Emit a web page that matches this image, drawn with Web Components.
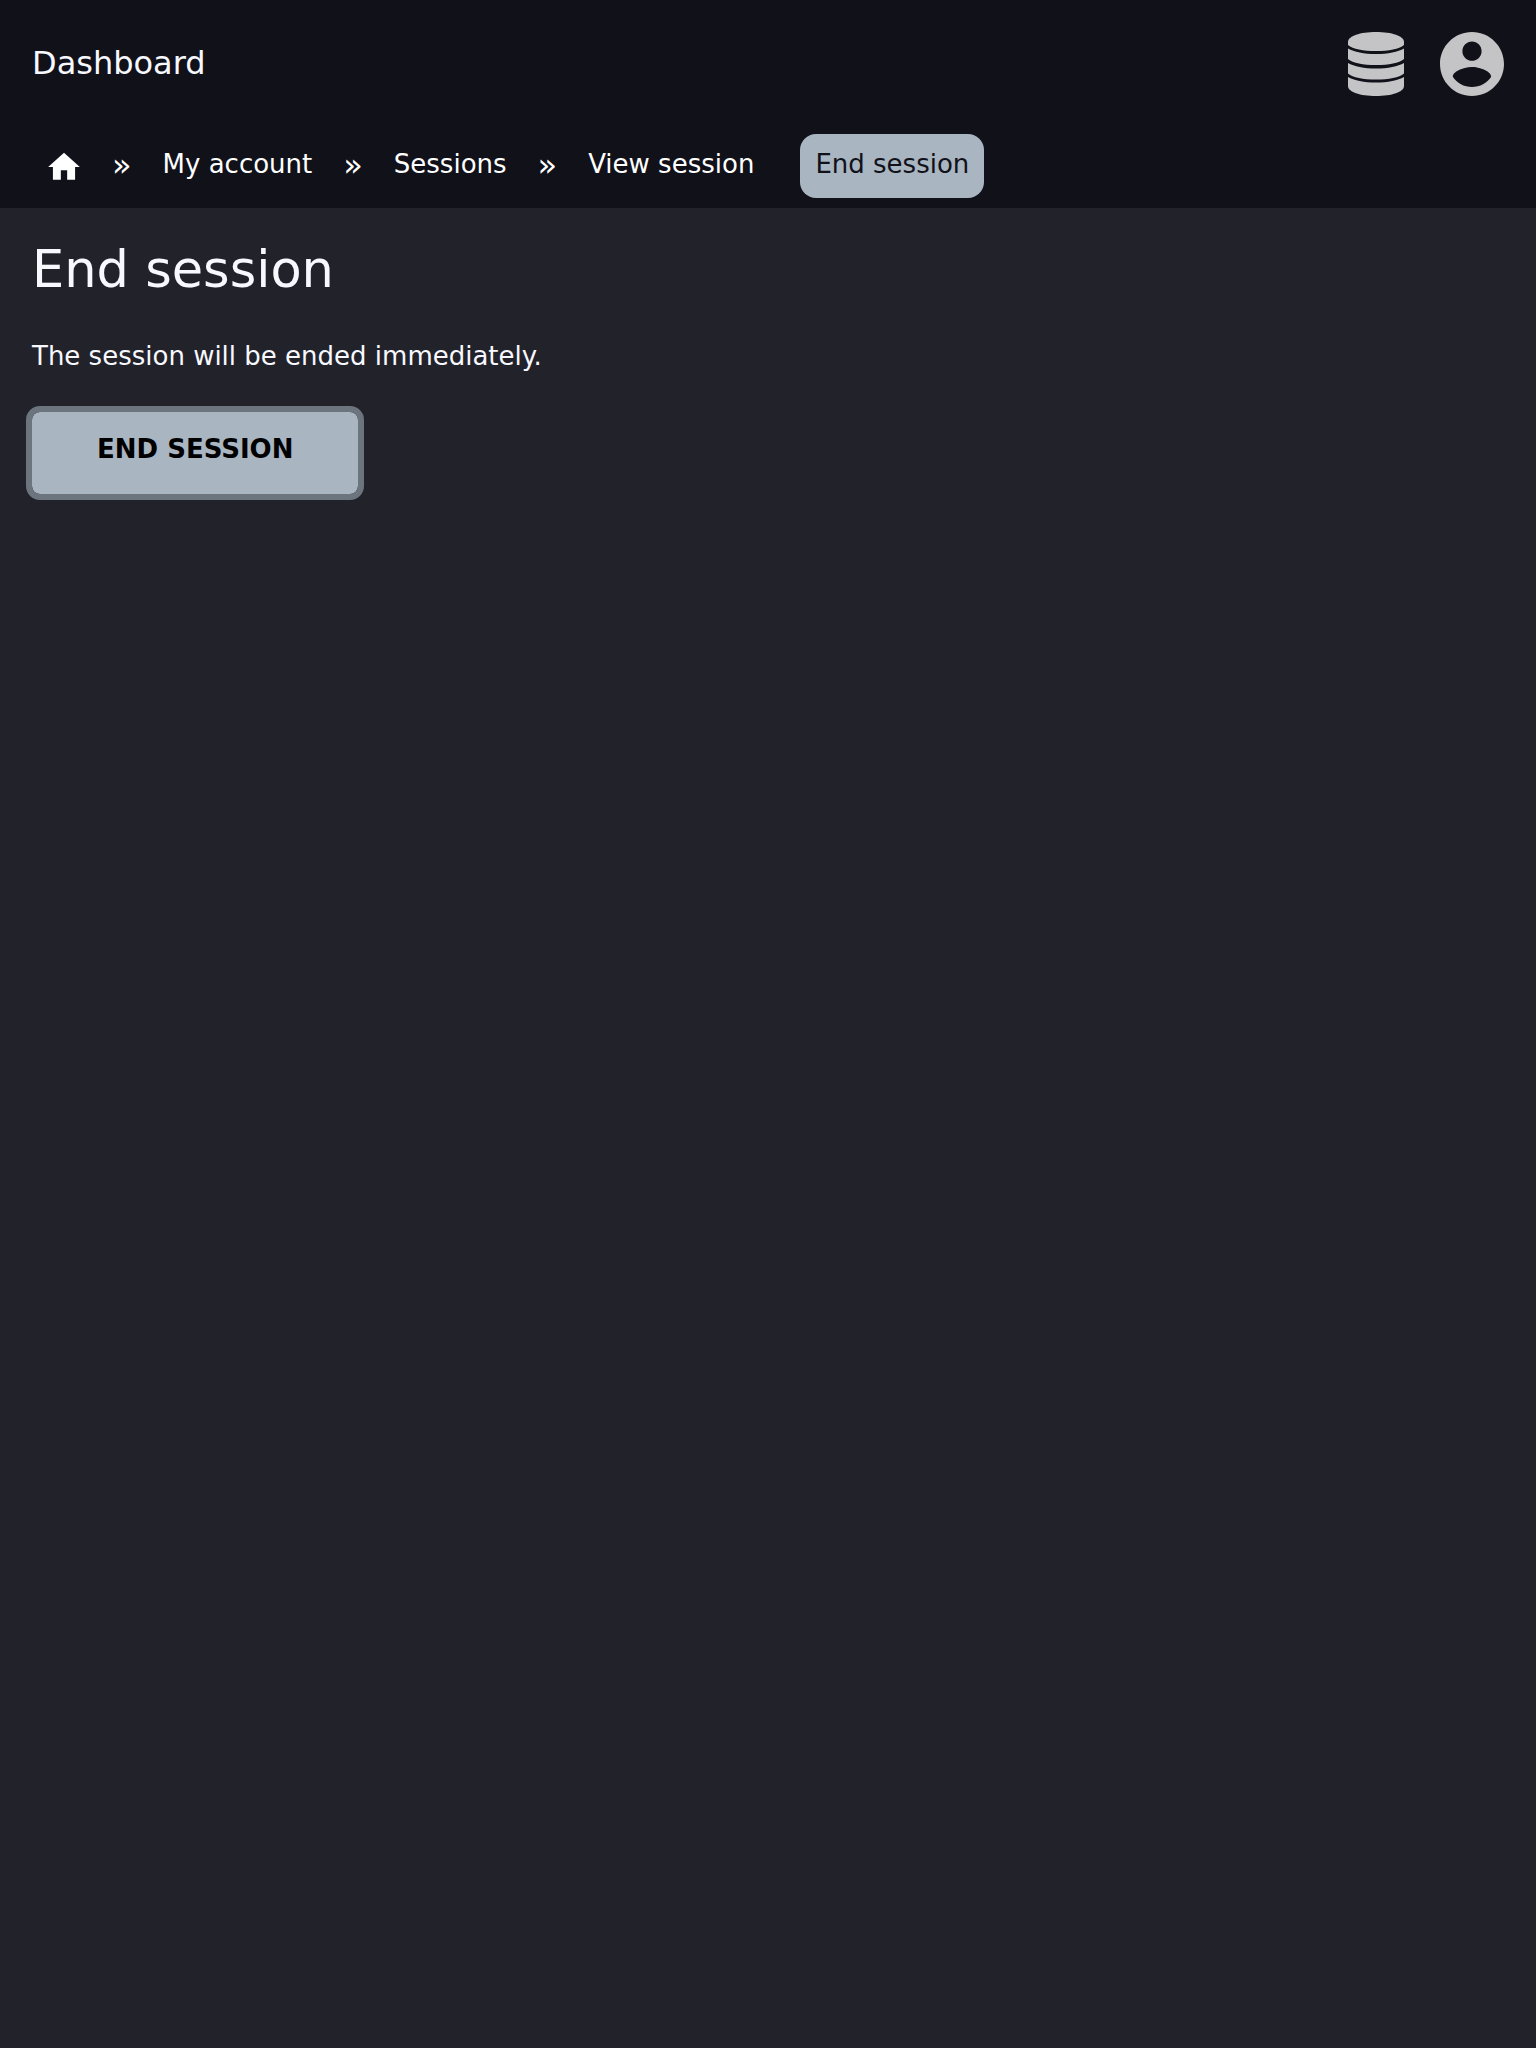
<!DOCTYPE html>
<html lang="en">
<head>
<meta charset="utf-8">
<meta name="viewport" content="width=device-width, initial-scale=1">
<title>End session</title>
<style>
html { background: #22222a; }
body { margin: 0; font: 26px/32px "DejaVu Sans", sans-serif; color: #f8f8ff; }
</style>
</head>
<body>
<app-header></app-header>
<crumb-bar>
  <crumb-link href="#home" label="Home" home></crumb-link>
  <crumb-separator></crumb-separator>
  <crumb-link href="#account">My account</crumb-link>
  <crumb-separator></crumb-separator>
  <crumb-link href="#sessions">Sessions</crumb-link>
  <crumb-separator></crumb-separator>
  <crumb-link href="#session">View session</crumb-link>
  <crumb-link href="#end" current>End session</crumb-link>
</crumb-bar>
<page-content>
  <span slot="title">End session</span>
  The session will be ended immediately.
  <action-button slot="actions">END SESSION</action-button>
</page-content>
<script>
function define(name, html, setup) {
  const template = document.createElement('template');
  template.innerHTML = html;
  customElements.define(name, class extends HTMLElement {
    connectedCallback() {
      if (this.shadowRoot) return;
      this.attachShadow({ mode: 'open' }).append(template.content.cloneNode(true));
      if (setup) setup(this, this.shadowRoot);
    }
  });
}

define('app-header', `
<style>
:host { display: block; background: #11111a; }
header { display: flex; align-items: center; justify-content: space-between; padding: 32px; }
a { color: inherit; text-decoration: none; }
.brand { font-size: 32px; line-height: 40px; padding-bottom: 2px; }
nav { display: flex; gap: 32px; color: #c4c4c6; }
nav a { display: flex; }
svg { width: 64px; height: 64px; fill: currentColor; }
</style>
<header>
  <a class="brand" href="#dashboard">Dashboard</a>
  <nav aria-label="Tools">
    <a href="#data" aria-label="Data"><svg viewBox="0 0 64 64"><path d="M4 10C4 4 16 0 32 0s28 4 28 10v3c-5 4-15 6-28 6S9 17 4 13z"/><path d="M4 16.500c6 3.500 16 5.500 28 5.500s22-2 28-5.500V27c-5 4-15 6-28 6S9 31 4 27z"/><path d="M4 31c6 3.500 16 5.500 28 5.500S54 34.500 60 31v10.500c-5 4-15 6-28 6s-23-2-28-6z"/><path d="M4 45c6 3.500 16 5.500 28 5.500S54 48.500 60 45v9c0 6-12 10-28 10S4 60 4 54z"/></svg></a>
    <a href="#profile" aria-label="Profile"><svg viewBox="2 2 20 20"><path d="M12 2C6.480 2 2 6.480 2 12s4.480 10 10 10 10-4.480 10-10S17.520 2 12 2zm0 3c1.660 0 3 1.340 3 3s-1.340 3-3 3-3-1.340-3-3 1.340-3 3-3zm0 14.200c-2.500 0-4.710-1.280-6-3.220.030-1.990 4-3.080 6-3.080 1.990 0 5.970 1.090 6 3.080-1.290 1.940-3.500 3.220-6 3.220z"/></svg></a>
  </nav>
</header>`);

define('crumb-bar', `
<style>
:host { display: block; background: #11111a; color: #fff; }
nav { display: flex; flex-wrap: wrap; align-items: center; padding: 6px 32px 10px; }
</style>
<nav aria-label="Breadcrumb"><slot></slot></nav>`);

define('crumb-separator', `
<style>
:host { display: block; font-size: 32px; padding: 0 16px 2px; }
</style>
<span aria-hidden="true">»</span>`);

define('crumb-link', `
<style>
:host { display: block; }
a { display: flex; align-items: center; padding: 14px 15px 18px; color: inherit; text-decoration: none; border-radius: 16px; }
:host([current]) { margin-left: 31px; }
:host([current]) a { background: #a9b5c1; color: #11111a; }
:host([home]) a { padding: 14px 13px 12px; }
svg { display: block; width: 38px; height: 38px; fill: currentColor; }
</style>
<a><slot></slot></a>`, (host, root) => {
  const link = root.querySelector('a');
  link.href = host.getAttribute('href');
  if (host.hasAttribute('current')) link.setAttribute('aria-current', 'page');
  if (host.hasAttribute('home')) {
    link.setAttribute('aria-label', host.getAttribute('label'));
    link.innerHTML = '<svg viewBox="0 0 24 24"><path d="M10 20v-6h4v6h5v-8h3L12 3 2 12h3v8z"/></svg>';
  }
});

define('page-content', `
<style>
:host { display: block; }
main { display: flex; flex-direction: column; align-items: flex-start; gap: 40px; padding: 32px; }
h1 { margin: 0; font-size: 51px; line-height: 60px; font-weight: 400; }
p { margin: 0; }
</style>
<main>
  <h1><slot name="title"></slot></h1>
  <p><slot></slot></p>
  <slot name="actions"></slot>
</main>`);

define('action-button', `
<style>
:host { display: block; }
button { display: block; margin: 0; padding: 21px 65px 29px; border: 0; border-radius: 8px; background: #a9b5c1; color: #000; font: inherit; font-weight: 700; outline: 6px solid #6c757e; cursor: pointer; }
</style>
<button type="button"><slot></slot></button>`);
</script>
</body>
</html>
